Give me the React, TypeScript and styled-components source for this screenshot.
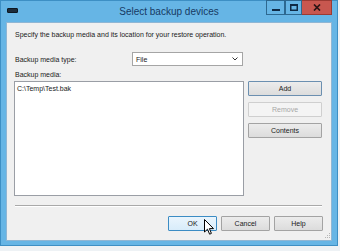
import styled, { createGlobalStyle } from "styled-components";

const GlobalStyle = createGlobalStyle`
    html, body {
        margin: 0;
        padding: 0;
        background: #eef2f5;
    }
    body {
        font-family: "Liberation Sans", Arial, sans-serif;
    }
`;

const Window = styled.div`
    position: relative;
    width: 338px;
    height: 246px;
    box-sizing: border-box;
    background: #66b5e5;
    border: 1px solid #3d8fc4;
    padding: 0 5px 4px 5px;
    display: flex;
    flex-direction: column;
`;

const TitleBar = styled.div`
    height: 21px;
    display: grid;
    grid-template-columns: 1fr auto 1fr;
    align-items: start;
`;

const SysIcon = styled.span`
    display: block;
    margin: 7px 0 0 1px;
    width: 9px;
    height: 3px;
    background: #1d2c3b;
    border: 1px solid #0e1822;
    border-radius: 1px;
`;

const Title = styled.div`
    font-size: 10px;
    color: #163a63;
    line-height: 21px;
    white-space: nowrap;
`;

const Captions = styled.div`
    display: flex;
    justify-content: flex-end;
    margin-top: -1px;
`;

const CaptionButton = styled.div<{ $w: number; $close?: boolean }>`
    width: ${(p) => p.$w}px;
    height: 15px;
    box-sizing: border-box;
    background: ${(p) => (p.$close ? "#c8574f" : "#66b5e5")};
    border: 1px solid ${(p) => (p.$close ? "#9b3a33" : "#2d6890")};
    border-left-width: ${(p) => (p.$close ? 0 : 1)}px;
    display: flex;
    align-items: center;
    justify-content: center;
`;

const Client = styled.div`
    flex: 1;
    background: #f0f0f0;
    border: 1px solid #8fb6d4;
    padding: 7px 8px 0 7px;
    display: flex;
    flex-direction: column;
`;

const Text = styled.div<{ $muted?: boolean }>`
    font-size: 7px;
    line-height: 9px;
    color: ${(p) => (p.$muted ? "#a0a0a0" : "#1a1a1a")};
    white-space: nowrap;
`;

const Intro = styled(Text)`
    margin-left: 1px;
`;

const TypeRow = styled.div`
    margin-top: 13px;
    display: flex;
    align-items: center;
    padding-left: 1px;
`;

const TypeLabel = styled(Text)`
    width: 117px;
`;

const Combo = styled.div`
    width: 111px;
    height: 14px;
    box-sizing: border-box;
    background: #fff;
    border: 1px solid #a5a5a5;
    display: flex;
    align-items: center;
    justify-content: space-between;
    padding: 0 4px 0 3px;
`;

const MediaLabel = styled(Text)`
    margin: 4px 0 2px 1px;
`;

const MainRow = styled.div`
    display: flex;
    gap: 4px;
`;

const ListBox = styled.div`
    width: 230px;
    height: 115px;
    box-sizing: border-box;
    background: #fff;
    border: 1px solid #9a9ea5;
    padding: 2px 2px;
`;

const SideButtons = styled.div`
    display: flex;
    flex-direction: column;
    gap: 6px;
`;

const Button = styled.div<{ $variant?: "default" | "disabled" | "hover" | "focus" }>`
    width: 74px;
    height: 15px;
    box-sizing: border-box;
    display: flex;
    align-items: center;
    justify-content: center;
    font-size: 7px;
    color: ${(p) => (p.$variant === "disabled" ? "#a7a7a7" : "#1a1a1a")};
    background: ${(p) =>
        p.$variant === "disabled"
            ? "#f4f4f4"
            : p.$variant === "hover"
            ? "linear-gradient(#eaf5fd, #d8ecfa)"
            : "linear-gradient(#ececec, #dcdcdc)"};
    border: 1px solid
        ${(p) =>
            p.$variant === "disabled"
                ? "#cfcfcf"
                : p.$variant === "hover"
                ? "#3c8cc4"
                : p.$variant === "focus"
                ? "#6b8fb0"
                : "#a3a3a3"};
    border-radius: 1px;
`;

const Separator = styled.div`
    margin: 9px 1px 0 1px;
    height: 1px;
    background: #a9a9a9;
    border-bottom: 1px solid #fff;
`;

const Footer = styled.div`
    margin-top: 9px;
    display: flex;
    justify-content: flex-end;
    gap: 4px;
`;

const FooterButton = styled(Button)`
    width: 49px;
`;

const OkWrap = styled.div`
    position: relative;
`;

const Cursor = styled.svg`
    position: absolute;
    left: 36px;
    top: 3px;
`;

const Grip = styled.svg`
    position: absolute;
    right: 6px;
    bottom: 6px;
`;

export default function App() {
    return (
        <>
            <GlobalStyle />
            <Window>
                <TitleBar>
                    <SysIcon />
                    <Title>Select backup devices</Title>
                    <Captions>
                        <CaptionButton $w={19}>
                            <svg width="8" height="8" viewBox="0 0 8 8">
                                <rect x="0" y="5" width="8" height="2" fill="#0f2a45" />
                            </svg>
                        </CaptionButton>
                        <CaptionButton $w={17}>
                            <svg width="8" height="7" viewBox="0 0 8 7">
                                <rect x="0.75" y="0.75" width="6.5" height="5.5" fill="none" stroke="#0f2a45" strokeWidth="1.5" />
                                <rect x="0" y="0" width="8" height="2" fill="#0f2a45" />
                            </svg>
                        </CaptionButton>
                        <CaptionButton $w={30} $close>
                            <svg width="8" height="7" viewBox="0 0 8 7">
                                <path d="M1 0.5 L7 6.5 M7 0.5 L1 6.5" stroke="#2a1515" strokeWidth="1.7" />
                            </svg>
                        </CaptionButton>
                    </Captions>
                </TitleBar>
                <Client>
                    <Intro>Specify the backup media and its location for your restore operation.</Intro>
                    <TypeRow>
                        <TypeLabel>Backup media type:</TypeLabel>
                        <Combo>
                            <Text>File</Text>
                            <svg width="6" height="4" viewBox="0 0 6 4">
                                <path d="M0.5 0.5 L3 3 L5.5 0.5" fill="none" stroke="#333" strokeWidth="1" />
                            </svg>
                        </Combo>
                    </TypeRow>
                    <MediaLabel>Backup media:</MediaLabel>
                    <MainRow>
                        <ListBox>
                            <Text>C:\Temp\Test.bak</Text>
                        </ListBox>
                        <SideButtons>
                            <Button $variant="focus">Add</Button>
                            <Button $variant="disabled">Remove</Button>
                            <Button>Contents</Button>
                        </SideButtons>
                    </MainRow>
                    <Separator />
                    <Footer>
                        <OkWrap>
                            <FooterButton $variant="hover">OK</FooterButton>
                            <Cursor width="11" height="17" viewBox="0 0 11 17">
                                <path
                                    d="M0.5 0.5 L0.5 13 L3.5 10.2 L5.6 15.2 L7.4 14.4 L5.4 9.6 L9.5 9.6 Z"
                                    fill="#fff"
                                    stroke="#000"
                                    strokeWidth="1"
                                    strokeLinejoin="round"
                                />
                            </Cursor>
                        </OkWrap>
                        <FooterButton>Cancel</FooterButton>
                        <FooterButton>Help</FooterButton>
                    </Footer>
                </Client>
                <Grip width="6" height="6" viewBox="0 0 6 6">
                    <rect x="4" y="0" width="1" height="1" fill="#b5b5b5" />
                    <rect x="2" y="2" width="1" height="1" fill="#b5b5b5" />
                    <rect x="4" y="2" width="1" height="1" fill="#b5b5b5" />
                    <rect x="0" y="4" width="1" height="1" fill="#b5b5b5" />
                    <rect x="2" y="4" width="1" height="1" fill="#b5b5b5" />
                    <rect x="4" y="4" width="1" height="1" fill="#b5b5b5" />
                </Grip>
            </Window>
        </>
    );
}
